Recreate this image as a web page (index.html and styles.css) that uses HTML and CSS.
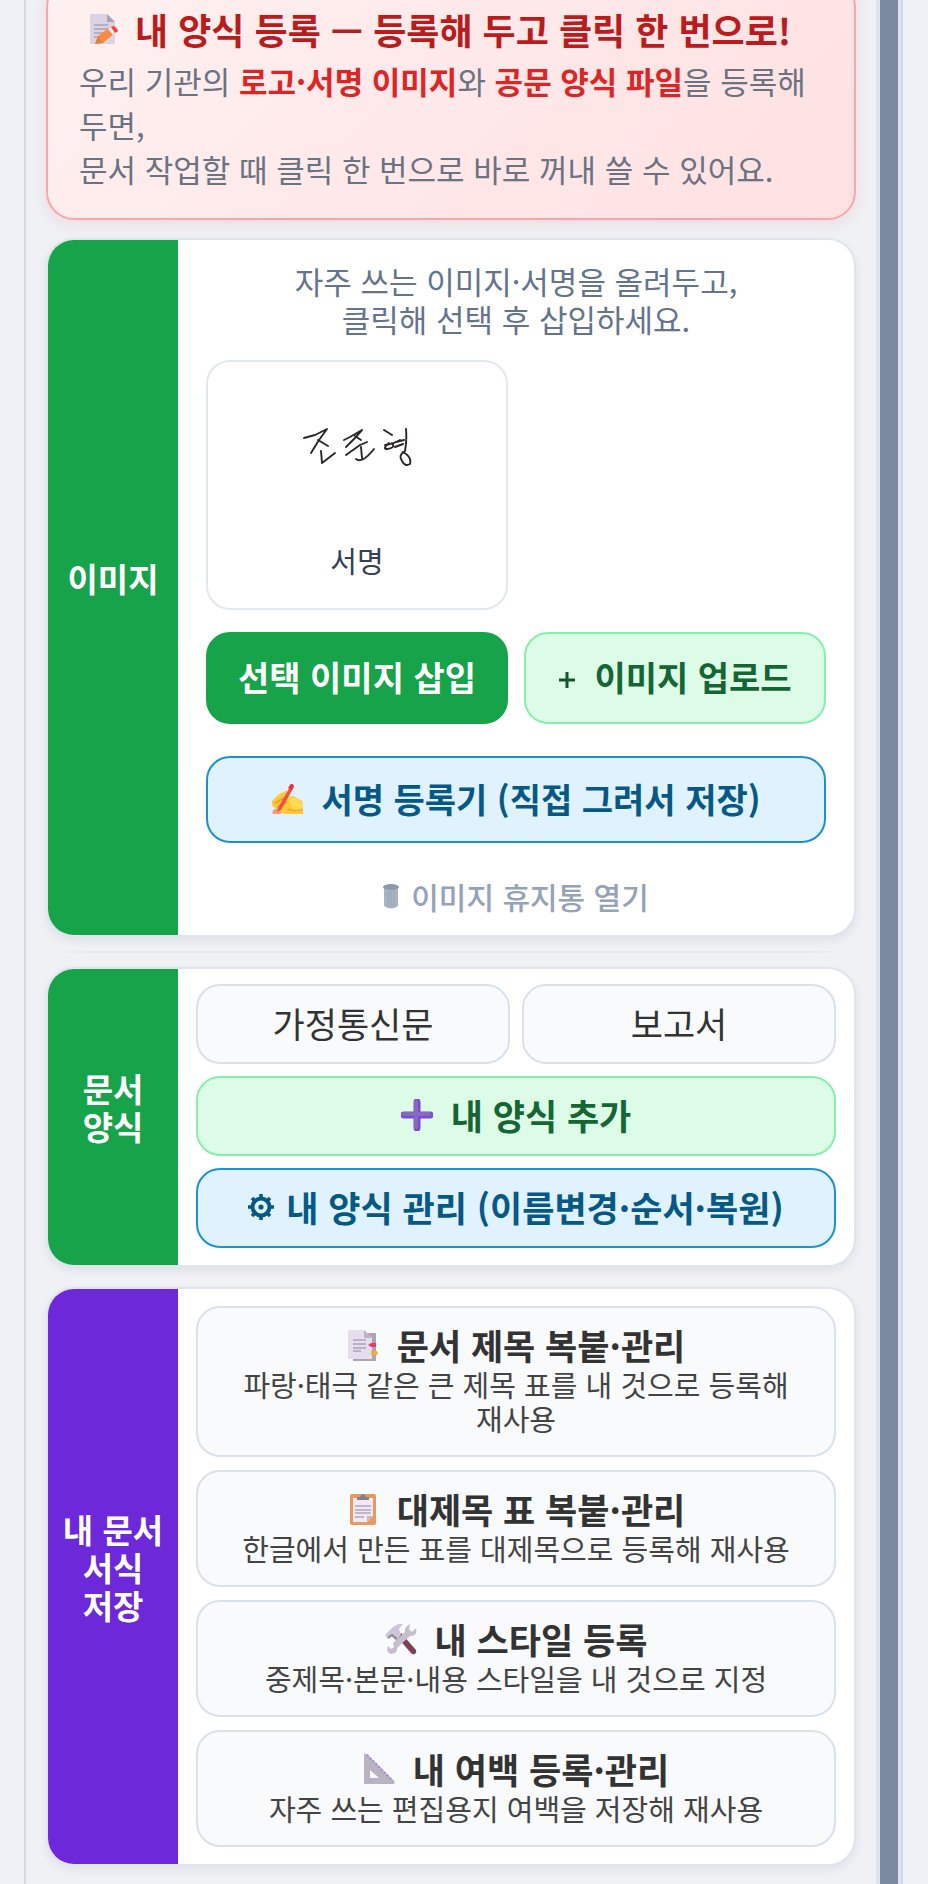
FILE: index.html
```html
<!DOCTYPE html>
<html lang="ko">
<head>
    <meta charset="UTF-8">
    <meta name="viewport" content="width=device-width, initial-scale=1.0">
    <title>내 양식 등록</title>
    <link rel="stylesheet" href="styles.css">
</head>
<body>
    <div class="panel">
        <main class="content">
            <div class="notice">
                <h2>
                    <svg class="icon" viewBox="0 0 32 32" aria-hidden="true">
                        <path d="M3 1h17l8 8v22H3z" fill="#d9d3e3"/>
                        <path d="M20 1l8 8h-8z" fill="#a9a1b5"/>
                        <path d="M7 12h14M7 16h14M7 20h11M7 24h6" stroke="#aaa3b8" stroke-width="1.6"/>
                        <path d="M8 31l3-8 12-9 5 6-12 10z" fill="#fb8b3c"/>
                        <path d="M8 31l3-8 5 7z" fill="#d98645"/>
                        <path d="M21 16l3-2 5 5-3 3z" fill="#f4eaf6"/>
                        <path d="M24 14l2-1q2 0 4 3 2 2 0 3l-2 1z" fill="#f4433c"/>
                    </svg>
                    내 양식 등록 — 등록해 두고 클릭 한 번으로!
                </h2>
                <p>우리 기관의 <strong>로고·서명 이미지</strong>와 <strong>공문 양식 파일</strong>을 등록해두면,<br>문서 작업할 때 클릭 한 번으로 바로 꺼내 쓸 수 있어요.</p>
            </div>

            <!-- 이미지 -->
            <section class="card">
                <h3 class="card-label green">이미지</h3>
                <div class="card-body image-body">
                    <p class="hint">자주 쓰는 이미지·서명을 올려두고,<br>클릭해 선택 후 삽입하세요.</p>
                    <div class="image-grid">
                        <button type="button" class="thumb">
                            <svg class="signature" viewBox="0 0 110 42" aria-hidden="true">
                                <g fill="none" stroke="#2b2629" stroke-width="1.9" stroke-linecap="round" stroke-linejoin="round">
                                    <path d="M2 11L13 8 25 2 17 13 9 26M16 13l10 6M19 24l1 12 13-10"/>
                                    <path d="M42 13l6-3 12-7-7 8-9 9M53 9l6 4M44 28l14-10 7-3M59 20l1 11M54 32q6 5 18-10"/>
                                    <path d="M82 3l8 5M83 18q6 0 15-5M87 16q-7 6-2 6 9-1 5-6M104 2q1 12-1 22M94 15l8-2M93 20l8-3M103 24q-7 4-3 10 3 6 8 3 2-7-7-12"/>
                                </g>
                            </svg>
                            <span>서명</span>
                        </button>
                    </div>
                    <div class="two-cols">
                        <button type="button" class="btn btn-insert">선택 이미지 삽입</button>
                        <button type="button" class="btn btn-add">
                            <svg class="icon-plus" viewBox="0 0 18 24" aria-hidden="true"><path d="M9 7v16M1 15h16" stroke="#14532d" stroke-width="3"/></svg>
                            이미지 업로드
                        </button>
                    </div>
                    <button type="button" class="btn btn-blue btn-signature">
                        <svg class="icon" viewBox="0 0 32 32" aria-hidden="true">
                            <path d="M2 31q-2-3 2-5l7-1 3 3-5 3z" fill="#f59b77"/>
                            <path d="M1 18l7-7 7-3q4 0 2 3l-2 3 7-1 9 5q1 1 1 4v9H16q-6 0-10-5-6-2-5-8z" fill="#ffc83d"/>
                            <path d="M4 20l9-5M6 24l10-5" stroke="#f39a28" stroke-width="1.6"/>
                            <path d="M17 14l7 1 8 5v5q-6 3-11 0z" fill="#ffda52"/>
                            <path d="M7 25L20 2l3 2L10 27l-4 2z" fill="#ee5140"/>
                            <path d="M19 2q2-3 4 1l-2 4-4-2z" fill="#f72b39"/>
                            <path d="M17 26q8 4 14 0" fill="none" stroke="#f5a52c" stroke-width="1.5"/>
                        </svg>
                        서명 등록기 (직접 그려서 저장)
                    </button>
                    <button type="button" class="trash-link">
                        <svg class="icon-trash" viewBox="0 0 16 26" aria-hidden="true">
                            <path d="M1 4h14v19q-7 5-14 0z" fill="#a9b3c3"/>
                            <ellipse cx="8" cy="4" rx="8" ry="3" fill="#8c98ab"/>
                            <path d="M5 8v15M8 8v16M11 8v15" stroke="#97a3b5" stroke-width="1"/>
                        </svg>
                        이미지 휴지통 열기
                    </button>
                </div>
            </section>

            <hr class="divider">

            <!-- 문서 양식 -->
            <section class="card">
                <h3 class="card-label green">문서<br>양식</h3>
                <div class="card-body form-body">
                    <button type="button" class="btn btn-plain">가정통신문</button>
                    <button type="button" class="btn btn-plain">보고서</button>
                    <button type="button" class="btn btn-add wide">
                        <svg class="icon" viewBox="0 0 32 32" aria-hidden="true">
                            <path d="M16 3v26M3 16h26" stroke="#8246dc" stroke-width="7" stroke-linecap="round"/>
                            <path d="M15 3v25M3 15h25" stroke="#846cb8" stroke-width="4" stroke-linecap="round"/>
                        </svg>
                        내 양식 추가
                    </button>
                    <button type="button" class="btn btn-blue wide">
                        <svg class="icon-gear" viewBox="0 0 26 26" aria-hidden="true">
                            <circle cx="13" cy="13" r="8.5" fill="none" stroke="#075985" stroke-width="4"/>
                            <path d="M13 0v5M13 21v5M0 13h5M21 13h5M4 4l3 3M19 19l3 3M22 4l-3 3M4 22l3-3" stroke="#075985" stroke-width="3.6"/>
                            <circle cx="13" cy="13" r="2.6" fill="#075985"/>
                        </svg>
                        내 양식 관리 (이름변경·순서·복원)
                    </button>
                </div>
            </section>

            <!-- 내 문서 서식 저장 -->
            <section class="card saved-card">
                <h3 class="card-label purple">내 문서<br>서식<br>저장</h3>
                <div class="card-body saved-body">
                    <button type="button" class="item">
                        <span class="item-title">
                            <svg class="icon" viewBox="0 0 32 32" aria-hidden="true">
                                <path d="M6 4h23v28H6z" fill="#aba4b4"/>
                                <path d="M1 1h16l8 8v21H1z" fill="#e6deef"/>
                                <path d="M17 1l8 8h-8z" fill="#bbb3c6"/>
                                <path d="M6 11h13M6 15h13M6 19h13M6 22h8" stroke="#aaa2b8" stroke-width="1.4"/>
                                <path d="M21 16l3-2h5v4h-5z" fill="#e83b66"/>
                                <path d="M24 22h6l1 2-1 2h-6z" fill="#f5ad2e"/>
                            </svg>
                            문서 제목 복붙·관리
                        </span>
                        <span class="item-desc">파랑·태극 같은 큰 제목 표를 내 것으로 등록해 재사용</span>
                    </button>
                    <button type="button" class="item">
                        <span class="item-title">
                            <svg class="icon" viewBox="0 0 32 32" aria-hidden="true">
                                <rect x="3" y="1" width="26" height="31" rx="2" fill="#e99a5b"/>
                                <path d="M6 5h20v18l-6 6H6z" fill="#f1e9f8"/>
                                <path d="M26 23l-6 6v-6z" fill="#c5b7cf"/>
                                <path d="M10 7V4h3q3-6 6 0h3v3z" fill="#85808c"/>
                                <path d="M8 13h16M8 17h16M8 20h16M8 24h9" stroke="#b0a6bb" stroke-width="1.5"/>
                            </svg>
                            대제목 표 복붙·관리
                        </span>
                        <span class="item-desc">한글에서 만든 표를 대제목으로 등록해 재사용</span>
                    </button>
                    <button type="button" class="item">
                        <span class="item-title">
                            <svg class="icon" viewBox="0 0 32 32" aria-hidden="true">
                                <path d="M12 14l4-4 15 17q1 2-1 4-2 1-4-1z" fill="#7c3f55"/>
                                <path d="M4 30q-3-2-1-7l3 3 3-2-1-4 12-11q-1-5 5-8l-1 5 3 3 4-4q2 8-6 8L12 25q1 5-6 6z" fill="#c6bdce"/>
                                <path d="M0 12l8-8q5-4 10-3l-4 5 2 6-5 6-5-5-3 3z" fill="#cfc5db"/>
                                <path d="M3 15l4-3 5 4" fill="none" stroke="#8d8598" stroke-width="2"/>
                            </svg>
                            내 스타일 등록
                        </span>
                        <span class="item-desc">중제목·본문·내용 스타일을 내 것으로 지정</span>
                    </button>
                    <button type="button" class="item">
                        <span class="item-title">
                            <svg class="icon" viewBox="0 0 32 32" aria-hidden="true">
                                <path d="M1 2q0-2 3-1l27 27q2 3-1 3H1zM7 17v8h9z" fill="#b9b3c1" fill-rule="evenodd"/>
                                <path d="M4 2l26 26" stroke="#a988cf" stroke-width="2" stroke-dasharray="2 2"/>
                            </svg>
                            내 여백 등록·관리
                        </span>
                        <span class="item-desc">자주 쓰는 편집용지 여백을 저장해 재사용</span>
                    </button>
                </div>
            </section>
        </main>
        <div class="scrollbar"><div class="scrollbar-thumb"></div></div>
    </div>
</body>
</html>
```
FILE: styles.css
```css
* {
    box-sizing: border-box;
}
body {
    margin: 0;
    background-color: #eef2f7;
    font-family: "Noto Sans CJK KR", sans-serif;
    word-break: keep-all;
    color: #333333;
}
h2, h3, p {
    margin: 0;
}
button {
    font-family: inherit;
    color: inherit;
    word-break: keep-all;
    cursor: pointer;
}

/* 사이드 패널 */
.panel {
    display: flex;
    min-height: 100vh;
    margin: 0 25px 0 24px;
    border-left: 2px solid #d1d9e6;
    border-right: 2px solid #d1d9e6;
    background-color: #eff1f5;
    overflow: hidden;
}
.content {
    flex: 1;
    min-width: 0;
    padding: 0 20px 16px;
}
.scrollbar {
    width: 25px;
    padding: 0 3px 0 4px;
    background-color: #dde4ec;
}
.scrollbar-thumb {
    height: 100%;
    background-color: #7b8aa1;
}

/* 상단 안내 */
.notice {
    margin-top: -21px;
    padding: 22px 28px 27px 31px;
    border: 2px solid #fca5a5;
    border-radius: 28px;
    background: linear-gradient(135deg, #fff1f1, #fee0e2);
    box-shadow: 0 4px 16px rgba(220, 38, 38, 0.1);
}
.notice h2 {
    display: flex;
    align-items: center;
    gap: 16px;
    margin-bottom: 4px;
    padding-left: 8px;
    font-size: 36px;
    line-height: 52px;
    white-space: nowrap;
    color: #b91c1c;
}
.notice p {
    font-size: 31px;
    line-height: 44px;
    color: #6b7280;
    word-break: normal;
}
.notice strong {
    color: #dc2626;
}

/* 카드 */
.card {
    display: flex;
    margin-top: 18px;
    border: 2px solid #dfe4ed;
    border-radius: 28px;
    background-color: #ffffff;
    box-shadow: 0 4px 10px rgba(15, 23, 42, 0.07);
    overflow: hidden;
}
.card-label {
    display: flex;
    align-items: center;
    justify-content: center;
    width: 130px;
    flex-shrink: 0;
    padding-bottom: 20px;
    font-size: 33px;
    line-height: 38px;
    text-align: center;
    color: #ffffff;
}
.green {
    background-color: #16a34a;
}
.purple {
    background-color: #6d28d9;
}
.card-body {
    flex: 1;
    min-width: 0;
}
.divider {
    height: 2px;
    margin: 14px 12px -4px;
    border: none;
    background: linear-gradient(90deg, transparent, #e4e7ec 5%, #e4e7ec 95%, transparent);
}

/* 버튼 공통 */
.btn {
    display: flex;
    align-items: center;
    justify-content: center;
    gap: 18px;
    min-height: 80px;
    padding: 0 12px 2px;
    border: 2px solid #dae1eb;
    border-radius: 24px;
    font-size: 35px;
    font-weight: bold;
    line-height: 44px;
}
.btn-plain {
    background-color: #f8fafc;
    font-weight: normal;
}
.btn-insert {
    border-color: #16a34a;
    background-color: #16a34a;
    color: #ffffff;
}
.btn-add {
    border-color: #86efac;
    background-color: #dcfce7;
    color: #166534;
}
.btn-blue {
    border-color: #1d91d0;
    background-color: #e0f2fe;
    color: #075985;
}
.icon {
    width: 32px;
    height: 32px;
    flex-shrink: 0;
}
.icon-plus {
    width: 18px;
    height: 24px;
}
.icon-gear {
    width: 26px;
    height: 26px;
}
.icon-trash {
    width: 16px;
    height: 26px;
}
.btn:has(.icon-gear) {
    gap: 12px;
}

/* 이미지 */
.image-body {
    padding: 22px 28px 16px 28px;
}
.hint {
    margin-bottom: 22px;
    font-size: 31px;
    line-height: 38px;
    text-align: center;
    color: #64748b;
}
.image-grid, .two-cols {
    display: grid;
    grid-template-columns: 1fr 1fr;
    gap: 16px;
}
.thumb {
    display: flex;
    flex-direction: column;
    align-items: center;
    justify-content: flex-start;
    height: 250px;
    padding: 22px 12px;
    border: 2px solid #e2e8f0;
    border-radius: 24px;
    background-color: #ffffff;
    font-size: 29px;
    line-height: 40px;
    color: #334155;
}
.signature {
    width: 110px;
    height: 128px;
    margin-bottom: 28px;
}
.two-cols {
    margin: 22px 0 32px;
}
.two-cols .btn {
    min-height: 92px;
}
.image-body .btn {
    font-size: 34px;
}
.btn-signature {
    width: 100%;
    min-height: 87px;
}
.trash-link {
    display: flex;
    align-items: center;
    justify-content: center;
    gap: 12px;
    width: 100%;
    margin-top: 32px;
    padding: 0 0 2px;
    border: none;
    background: none;
    font-size: 30px;
    font-weight: 500;
    line-height: 42px;
    color: #94a3b8;
}

/* 문서 양식 */
.form-body {
    display: grid;
    grid-template-columns: 1fr 1fr;
    gap: 12px;
    padding: 15px 18px 17px;
}
.wide {
    grid-column: span 2;
}

/* 내 문서 서식 저장 */
.saved-card {
    margin-top: 20px;
}
.saved-body {
    display: flex;
    flex-direction: column;
    gap: 13px;
    padding: 17px 18px;
}
.item {
    padding: 15px 32px 20px;
    border: 2px solid #dae1eb;
    border-radius: 24px;
    background-color: #f8fafc;
}
.item-title {
    display: flex;
    align-items: center;
    justify-content: center;
    gap: 18px;
    font-size: 35px;
    font-weight: bold;
    line-height: 44px;
}
.item-desc {
    display: block;
    font-size: 29px;
    line-height: 34px;
    color: #444444;
}
```
